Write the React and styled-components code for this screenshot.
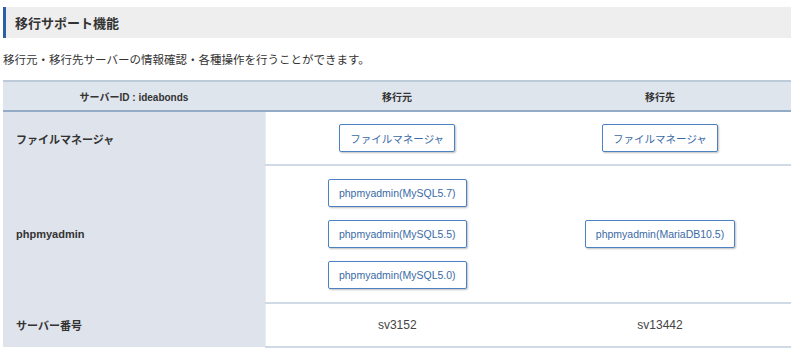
import React from "react";
import styled, { createGlobalStyle } from "styled-components";

const Global = createGlobalStyle`
  html, body { margin: 0; padding: 0; background: #fff; }
  body { font-family: "Liberation Sans", "Noto Sans CJK JP", sans-serif; color: #333; }
`;

const Page = styled.div`
  width: 788px;
  padding: 7px 0 0 3px;
`;

const TitleBar = styled.h2`
  margin: 0;
  height: 31px;
  display: flex;
  align-items: center;
  background: #eeeeee;
  border-left: 3px solid #2c60a6;
  padding-left: 9px;
  font-size: 13px;
  font-weight: bold;
  color: #333;
`;

const Lead = styled.p`
  margin: 13px 0 0;
  height: 18px;
  line-height: 18px;
  font-size: 11.5px;
  color: #333;
`;

const Table = styled.table`
  margin-top: 11px;
  width: 788px;
  border-collapse: collapse;
  table-layout: fixed;
`;

const HeadRow = styled.tr`
  height: 30px;
  background: #dfe5ed;
  border-top: 2px solid #bccada;
  border-bottom: 2px solid #94abc5;
`;

const HeadCell = styled.th`
  font-size: 10px;
  font-weight: bold;
  color: #333;
  text-align: center;
  padding: 0;
`;

const Row = styled.tr`
  height: ${(p) => p.$h}px;
`;

const LabelCell = styled.th`
  background: #dfe4ec;
  border-right: 1px solid #e9edf2;
  text-align: left;
  padding: 0 0 0 13px;
  font-size: 11px;
  font-weight: bold;
  color: #333;
`;

const Cell = styled.td`
  text-align: center;
  vertical-align: middle;
  padding: ${(p) => (p.$pad ? "13px 0" : "0")};
  border-bottom: 2px solid #cfdae6;
  font-size: 12px;
  color: #444;
`;

const Stack = styled.div`
  display: flex;
  flex-direction: column;
  align-items: center;
  gap: 13px;
`;

const Button = styled.button`
  height: 28px;
  padding: 0 10px;
  background: #fff;
  border: 1px solid #4d82c2;
  border-radius: 2px;
  box-shadow: 1px 1px 2px rgba(0, 0, 0, 0.25);
  font-family: "Liberation Sans", "Noto Sans CJK JP", sans-serif;
  font-size: 10.5px;
  color: #3a6aa6;
  cursor: pointer;
  white-space: nowrap;
`;

export default function App() {
  return (
    <>
      <Global />
      <Page>
        <TitleBar>移行サポート機能</TitleBar>
        <Lead>移行元・移行先サーバーの情報確認・各種操作を行うことができます。</Lead>
        <Table>
          <colgroup>
            <col style={{ width: 262 }} />
            <col style={{ width: 264 }} />
            <col />
          </colgroup>
          <thead>
            <HeadRow>
              <HeadCell>サーバーID : ideabonds</HeadCell>
              <HeadCell>移行元</HeadCell>
              <HeadCell>移行先</HeadCell>
            </HeadRow>
          </thead>
          <tbody>
            <Row $h={54}>
              <LabelCell>ファイルマネージャ</LabelCell>
              <Cell>
                <Button>ファイルマネージャ</Button>
              </Cell>
              <Cell>
                <Button>ファイルマネージャ</Button>
              </Cell>
            </Row>
            <Row $h={136}>
              <LabelCell>phpmyadmin</LabelCell>
              <Cell $pad>
                <Stack>
                  <Button>phpmyadmin(MySQL5.7)</Button>
                  <Button>phpmyadmin(MySQL5.5)</Button>
                  <Button>phpmyadmin(MySQL5.0)</Button>
                </Stack>
              </Cell>
              <Cell>
                <Button>phpmyadmin(MariaDB10.5)</Button>
              </Cell>
            </Row>
            <Row $h={44}>
              <LabelCell>サーバー番号</LabelCell>
              <Cell>sv3152</Cell>
              <Cell>sv13442</Cell>
            </Row>
          </tbody>
        </Table>
      </Page>
    </>
  );
}
